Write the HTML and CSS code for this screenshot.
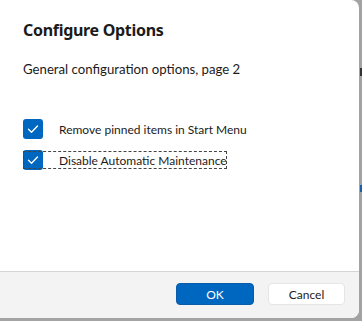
FILE: index.html
```html
<!DOCTYPE html>
<html lang="en">
<head>
  <meta charset="UTF-8">
  <title>Configure Options</title>
  <link rel="stylesheet" href="styles.css">
</head>
<body>
  <div class="screen">
    <div class="dialog">
      <div class="content">
        <h1>Configure Options</h1>
        <p class="description">General configuration options, page 2</p>

        <div class="options">
          <label class="option">
            <span class="box">
              <svg width="20" height="20" viewBox="0 0 20 20"><path d="M5.5 10.2l3 3 6-6.2" fill="none" stroke="#fff" stroke-width="1.4" stroke-linecap="round" stroke-linejoin="round"/></svg>
            </span>
            <span class="text">Remove pinned items in Start Menu</span>
          </label>
          <label class="option focused">
            <span class="box">
              <svg width="20" height="20" viewBox="0 0 20 20"><path d="M5.5 10.2l3 3 6-6.2" fill="none" stroke="#fff" stroke-width="1.4" stroke-linecap="round" stroke-linejoin="round"/></svg>
            </span>
            <span class="text">Disable Automatic Maintenance</span>
          </label>
        </div>
      </div>

      <div class="footer">
        <button class="btn primary">OK</button>
        <button class="btn">Cancel</button>
      </div>
    </div>

    <!-- window behind the dialog -->
    <div class="behind">
      <span class="mark dark"></span>
      <span class="mark blue"></span>
    </div>
  </div>
</body>
</html>
```

FILE: styles.css
```css
* { box-sizing: border-box; }
body {
  margin: 0;
  font-family: Lato, 'Noto Sans', sans-serif;
  background: #a3a3a3;
  color: #1b1b1b;
}
.screen {
  display: flex;
  width: 362px;
  height: 321px;
}
.dialog {
  width: 359px;
  height: 318px;
  background: #fff;
  border-radius: 0 8px 8px 0;
  display: flex;
  flex-direction: column;
  overflow: hidden;
}
.content {
  flex: 1;
  padding: 19px 0 0 23px;
}
h1 {
  margin: 0;
  font-family: 'Noto Sans', sans-serif;
  font-size: 16px;
  font-weight: 700;
  line-height: 22px;
  letter-spacing: -0.3px;
}
.description {
  margin: 18px 0 0;
  font-size: 13.2px;
  line-height: 20px;
}
.options {
  margin-top: 40px;
  display: flex;
  flex-direction: column;
  gap: 11px;
}
.option {
  display: flex;
  align-items: center;
  gap: 16px;
  font-size: 12px;
  height: 20px;
  width: max-content;
}
.box {
  width: 20px;
  height: 20px;
  border-radius: 3px;
  background: #0067c0;
  display: flex;
}
.option.focused {
  outline: 1px dashed #444;
  outline-offset: -1px;
  height: 18px;
  margin-top: 1px;
}
.footer {
  height: 47px;
  border-top: 1px solid #d5d5d5;
  background: #f3f3f3;
  display: flex;
  justify-content: flex-end;
  align-items: center;
  gap: 14px;
  padding: 0 14px 2px 0;
}
.btn {
  font-family: inherit;
  font-size: 12px;
  height: 22px;
  width: 77px;
  border-radius: 4px;
  border: 1px solid #e5e5e5;
  background: #fff;
  color: #1b1b1b;
  padding: 0;
}
.btn.primary {
  width: 78px;
  background: #0067c0;
  border-color: #0a5ba8;
  color: #fff;
}
.behind {
  flex: 1;
  display: flex;
  flex-direction: column;
  padding-top: 68px;
}
.mark {
  width: 2px;
  margin-left: 1px;
}
.mark.dark {
  height: 8px;
  background: #333;
}
.mark.blue {
  height: 7px;
  margin-top: 109px;
  background: #1a5fa8;
}
```
